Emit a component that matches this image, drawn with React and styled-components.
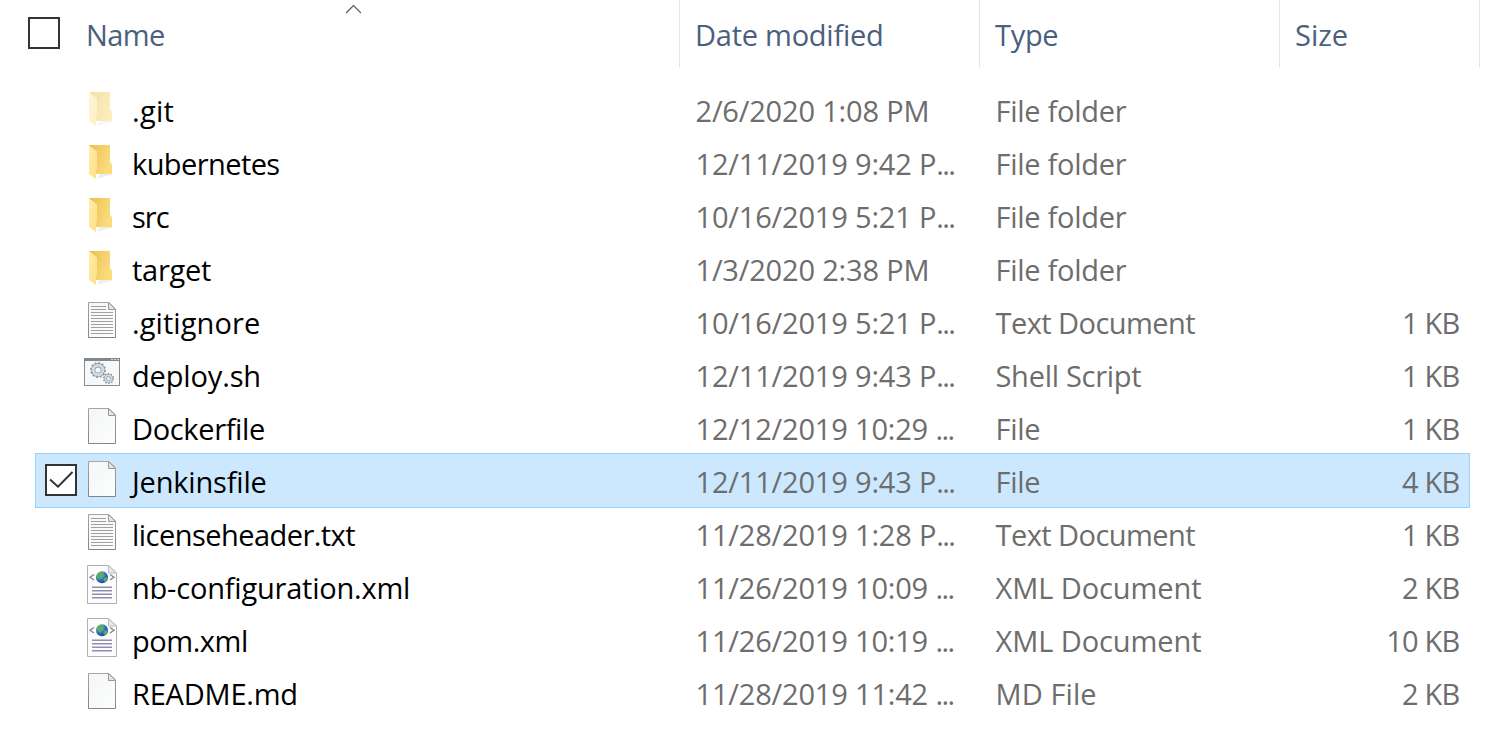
import React from 'react';
import styled, { createGlobalStyle } from 'styled-components';

const GlobalStyle = createGlobalStyle`
  * { box-sizing: border-box; }
  body { margin: 0; background: #fff; }
`;

const Explorer = styled.main`
  width: 1507px;
  height: 744px;
  overflow: hidden;
  background: #fff;
  font-family: "Segoe UI", "Open Sans", "Noto Sans", sans-serif;
  font-size: 29px;
  line-height: 53px;
  white-space: nowrap;
`;

const Header = styled.header`
  display: grid;
  grid-template-columns: 680px 300px 300px 200px;
  height: 67px;
  margin-bottom: 16px;
  color: #4a607e;
`;

const HeaderCell = styled.div`
  display: flex;
  padding: 8px 0 0 ${({ $first }) => ($first ? '28px' : '15px')};
  border-right: 1px solid #e5e5e5;
  position: relative;
  letter-spacing: ${({ $track }) => $track || 0}px;
`;

const Checkbox = styled.span`
  display: block;
  flex: none;
  width: 32px;
  height: 32px;
  margin: ${({ $header }) => ($header ? '9px 26px 0 0' : '10px 0 0 9px')};
  border: 2px solid #333;
  background: #fff;
  svg { display: block; }
`;

const SortArrow = styled.svg`
  position: absolute;
  left: 345px;
  top: 4px;
`;

const Row = styled.div`
  display: grid;
  grid-template-columns: 659.5px 300px 300px 1fr;
  width: 1435px;
  height: ${({ $selected }) => ($selected ? 55 : 53)}px;
  margin: ${({ $selected }) => ($selected ? '-1px' : '0')} 0 ${({ $selected }) => ($selected ? '-1px' : '0')} 35px;
  border: solid ${({ $selected }) => ($selected ? '#99d1ff' : 'transparent')};
  border-width: ${({ $selected }) => ($selected ? '1px' : '0 1px')};
  background: ${({ $selected }) => ($selected ? '#cce8ff' : 'transparent')};
`;

const NameCell = styled.div`
  display: flex;
  color: #000;
`;

const CheckSlot = styled.div`
  width: 46px;
`;

const IconSlot = styled.svg`
  display: block;
  flex: none;
  width: 40px;
  height: 53px;
  margin-right: 10px;
`;

const Text = styled.span`
  display: block;
  padding-top: 1px;
  height: 53px;
  letter-spacing: ${({ $track }) => $track || 0}px;
`;

const Ellipsis = styled.span`
  letter-spacing: -1.6px;
`;

const DetailCell = styled.div`
  color: #6d6d6d;
  text-align: ${({ $right }) => ($right ? 'right' : 'left')};
  padding-right: ${({ $right }) => ($right ? '9.6px' : '0')};
`;

function FolderIcon({ faded }) {
  return (
    <IconSlot viewBox="0 0 40 53" opacity={faded ? 0.5 : 1}>
      <defs>
        <linearGradient id="folderBack" x1="0" x2="1" y1="0" y2="0.4">
          <stop offset="0" stopColor="#e8bf52" />
          <stop offset="1" stopColor="#fbdc7c" />
        </linearGradient>
        <linearGradient id="folderFront" x1="0" x2="1" y1="0" y2="1">
          <stop offset="0" stopColor="#ffedaa" />
          <stop offset="1" stopColor="#ffdf86" />
        </linearGradient>
      </defs>
      <path d="M15 42.500L18 38h12.500v.8z" fill="#eee" />
      <path d="M7 9h21v17l2 2.500V38H14z" fill="url(#folderBack)" />
      <path d="M7 9l8 6.500V33l-1 1.500V43l-7-5z" fill="url(#folderFront)" />
    </IconSlot>
  );
}

function PageShape() {
  return (
    <>
      <defs>
        <linearGradient id="page" x1="0" x2="1" y1="0" y2="1">
          <stop offset="0" stopColor="#f5f6f7" />
          <stop offset="1" stopColor="#fcfdfd" />
        </linearGradient>
        <linearGradient id="pageEdge" x1="0" x2="0" y1="0" y2="1">
          <stop offset="0" stopColor="#a5a5a5" />
          <stop offset="1" stopColor="#858585" />
        </linearGradient>
      </defs>
      <path d="M6.500 7.500H27l6.500 6.500V42.500h-27z" fill="url(#page)" stroke="url(#pageEdge)" />
      <path d="M26.500 7.500V14.500H33.500z" fill="#e3e5e6" stroke="#999" />
    </>
  );
}

function FileIcon() {
  return <IconSlot viewBox="0 0 40 53"><PageShape /></IconSlot>;
}

function TextIcon() {
  return (
    <IconSlot viewBox="0 0 40 53">
      <PageShape />
      <path d="M9 11.500h15M9 14.500h15M9 17.500h22M9 20.500h22M9 23.500h22M9 26.500h22M9 29.500h22M9 32.500h22M9 35.500h22M9 38.500h22" stroke="#a0a0a0" />
    </IconSlot>
  );
}

function ScriptIcon() {
  return (
    <IconSlot viewBox="0 0 40 53">
      <path d="M2.500 10.500h35v27h-35z" fill="#f7f8f8" stroke="#858b8e" />
      <path d="M2 10h36v3H2z" fill="#81878a" />
      <path d="M29 11.500h2M32 11.500h2M35 11.500h2" stroke="#d3d6d8" />
      <circle cx="16" cy="22" r="7" fill="none" stroke="#8b9aa3" strokeWidth="2" strokeDasharray="1.8 1.865" />
      <circle cx="16" cy="22" r="4.800" fill="none" stroke="#8b9aa3" strokeWidth="4.400" />
      <circle cx="16" cy="22" r="4.800" fill="none" stroke="#cfdae1" strokeWidth="3" />
      <circle cx="26.500" cy="30.500" r="4.800" fill="none" stroke="#8b9aa3" strokeWidth="1.600" strokeDasharray="1.5 1.516" />
      <circle cx="26.500" cy="30.500" r="3.100" fill="none" stroke="#8b9aa3" strokeWidth="3" />
      <circle cx="26.500" cy="30.500" r="3.100" fill="none" stroke="#cfdae1" strokeWidth="1.800" />
    </IconSlot>
  );
}

function XmlIcon() {
  return (
    <IconSlot viewBox="0 0 40 53">
      <defs>
        <radialGradient id="globe" cx="0.35" cy="0.3" r="0.75">
          <stop offset="0" stopColor="#8ccdf5" />
          <stop offset="0.5" stopColor="#2e7ec6" />
          <stop offset="1" stopColor="#173f8d" />
        </radialGradient>
      </defs>
      <path d="M5.500 5.500H26.500l8 7.500V43.500H5.500z" fill="#fcfcfc" stroke="#b0b0b0" />
      <path d="M26.500 5.500V13h8z" fill="#e8e8e8" stroke="#bbb" />
      <path d="M12 14.500L8 17.300l4 2.700M28 14.500l4 2.800-4 2.700" fill="none" stroke="#7780ab" strokeWidth="1.300" />
      <circle cx="20" cy="17.300" r="6" fill="url(#globe)" />
      <path d="M15 14.500l3-2.500 4 .5-1 2.500-2 1 .5 2-2.500 1-2-1.500zM22 18l3-1 .5 2-2 3-2-1z" fill="#5eae45" />
      <path d="M10 27.200h20M10 30.700h20M10 34.200h20M10 37.700h20" stroke="#8f8db2" strokeWidth="1.500" />
    </IconSlot>
  );
}

const icons = { folder: FolderIcon, text: TextIcon, script: ScriptIcon, file: FileIcon, xml: XmlIcon };

const typeTracking = {
  'File folder': -0.28,
  'Text Document': -0.55,
  'Shell Script': -0.28,
  'XML Document': -0.08,
  File: -0.3,
  'MD File': 0.1,
};

const files = [
  { name: '.git', track: 0.3, icon: 'folder', faded: true, date: '2/6/2020 1:08 PM', type: 'File folder' },
  { name: 'kubernetes', track: -0.58, icon: 'folder', date: '12/11/2019 9:42 P', cut: true, type: 'File folder' },
  { name: 'src', track: -1, icon: 'folder', date: '10/16/2019 5:21 P', cut: true, type: 'File folder' },
  { name: 'target', track: -0.25, icon: 'folder', date: '1/3/2020 2:38 PM', type: 'File folder' },
  { name: '.gitignore', track: 0.08, icon: 'text', date: '10/16/2019 5:21 P', cut: true, type: 'Text Document', size: '1 KB' },
  { name: 'deploy.sh', track: -0.15, icon: 'script', date: '12/11/2019 9:43 P', cut: true, type: 'Shell Script', size: '1 KB' },
  { name: 'Dockerfile', track: -0.35, icon: 'file', date: '12/12/2019 10:29 ', cut: true, type: 'File', size: '1 KB' },
  { name: 'Jenkinsfile', track: -0.18, icon: 'file', date: '12/11/2019 9:43 P', cut: true, type: 'File', size: '4 KB', selected: true },
  { name: 'licenseheader.txt', track: -0.54, icon: 'text', date: '11/28/2019 1:28 P', cut: true, type: 'Text Document', size: '1 KB' },
  { name: 'nb-configuration.xml', track: -0.21, icon: 'xml', date: '11/26/2019 10:09 ', cut: true, type: 'XML Document', size: '2 KB' },
  { name: 'pom.xml', track: -0.45, icon: 'xml', date: '11/26/2019 10:19 ', cut: true, type: 'XML Document', size: '10 KB' },
  { name: 'README.md', track: -0.22, icon: 'file', date: '11/28/2019 11:42 ', cut: true, type: 'MD File', size: '2 KB' },
];

function FileRow({ file }) {
  const Icon = icons[file.icon];
  return (
    <Row $selected={file.selected}>
      <NameCell>
        <CheckSlot>
          {file.selected && (
            <Checkbox>
              <svg width="28" height="28" viewBox="0 0 28 28">
                <path d="M3 13.500l8 7.200L25.500 6" fill="none" stroke="#333" strokeWidth="2" />
              </svg>
            </Checkbox>
          )}
        </CheckSlot>
        <Icon faded={file.faded} />
        <Text $track={file.track}>{file.name}</Text>
      </NameCell>
      <DetailCell>
        <Text $track={-0.18}>{file.date}{file.cut && <Ellipsis>...</Ellipsis>}</Text>
      </DetailCell>
      <DetailCell><Text $track={typeTracking[file.type]}>{file.type}</Text></DetailCell>
      <DetailCell $right><Text $track={-0.8}>{file.size}</Text></DetailCell>
    </Row>
  );
}

export default function App() {
  return (
    <Explorer>
      <GlobalStyle />
      <Header>
        <HeaderCell $first $track={-0.6}>
          <Checkbox $header />
          Name
          <SortArrow width="16" height="11" viewBox="0 0 16 11">
            <path d="M1 9l7.500-7.500L16 9" fill="none" stroke="#555" strokeWidth="1.200" />
          </SortArrow>
        </HeaderCell>
        <HeaderCell $track={-0.25}>Date modified</HeaderCell>
        <HeaderCell $track={-0.3}>Type</HeaderCell>
        <HeaderCell>Size</HeaderCell>
      </Header>
      {files.map((file) => <FileRow key={file.name} file={file} />)}
    </Explorer>
  );
}
